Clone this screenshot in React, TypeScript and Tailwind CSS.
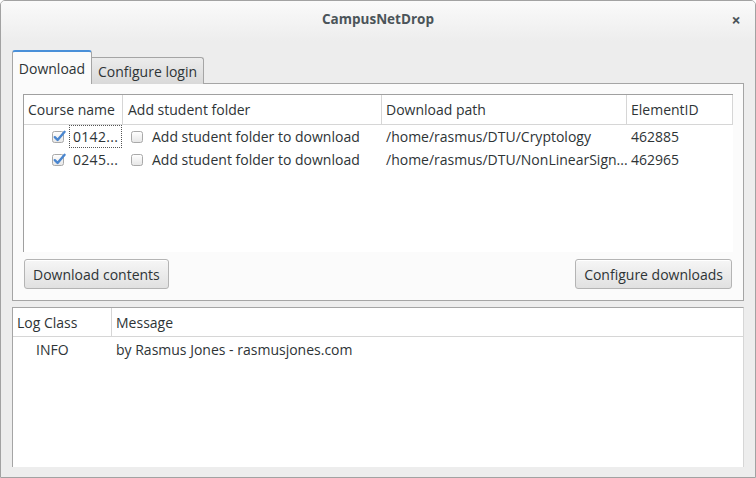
import React from 'react';

const font = { fontFamily: '"Open Sans", "DejaVu Sans", sans-serif' };

function CheckBox({ checked }: { checked: boolean }) {
  return (
    <svg width="15" height="15" viewBox="0 0 15 15" className="shrink-0">
      <defs>
        <linearGradient id="cbg" x1="0" y1="0" x2="0" y2="1">
          <stop offset="0" stopColor="#ffffff" />
          <stop offset="1" stopColor="#e6e6e6" />
        </linearGradient>
      </defs>
      <rect x="0.5" y="2.5" width="11" height="11" rx="2" fill="url(#cbg)" stroke="#a9a9a9" />
      {checked && (
        <path d="M2.8 8.2 L5.6 11 L12.6 2.8" fill="none" stroke="#4a86cf" strokeWidth="2.4" strokeLinecap="round" strokeLinejoin="round" />
      )}
    </svg>
  );
}

const rows = [
  { course: '0142...', path: '/home/rasmus/DTU/Cryptology', id: '462885', focus: true },
  { course: '0245...', path: '/home/rasmus/DTU/NonLinearSign...', id: '462965', focus: false },
];

function Button({ children }: { children: React.ReactNode }) {
  return (
    <button className="h-[30px] px-[8px] rounded-[3px] border border-[#b4b4b4] bg-gradient-to-b from-[#f6f6f6] to-[#e1e1e1] text-[14px] text-[#2e3436] shadow-[inset_0_1px_0_#ffffff]">
      {children}
    </button>
  );
}

export default function App() {
  return (
    <div
      style={font}
      className="w-[756px] h-[478px] flex flex-col border border-[#a2a2a2] rounded-t-[5px] bg-[#ededed] overflow-hidden text-[14px] text-[#2e3436]"
    >
      {/* title bar */}
      <div className="h-[40px] shrink-0 flex items-center bg-gradient-to-b from-[#fafafa] to-[#ededed] pb-[3px]">
        <div className="w-[40px]" />
        <div className="flex-1 text-center font-bold text-[#4b5459] text-[13.5px]">CampusNetDrop</div>
        <div className="w-[40px] text-center text-[#4b5459] text-[16px] font-bold pl-[2px]">×</div>
      </div>

      <div className="flex-1 flex flex-col px-[11px] pt-[9px]">
        {/* tabs */}
        <div className="flex items-end h-[34px] relative z-10 -mb-px">
          <div className="h-[34px] w-[80px] flex items-center justify-center rounded-t-[3px] border border-b-0 border-[#a5a5a5] border-t-2 border-t-[#4a90d9] bg-[#fbfbfb]">
            Download
          </div>
          <div className="h-[27px] w-[112px] flex items-center justify-center rounded-tr-[3px] border border-l-0 border-b-0 border-[#a5a5a5] bg-gradient-to-b from-[#ececec] to-[#d9d9d9]">
            Configure login
          </div>
        </div>

        {/* tab panel */}
        <div className="h-[218px] shrink-0 border border-[#a5a5a5] bg-[#fbfbfb] px-[10px] pt-[10px] pb-[10px] flex flex-col">
          <div className="h-[158px] shrink-0 bg-white border-l border-t border-[#a0a0a0]">
            <div className="flex h-[30px] border-b border-r border-[#d6d6d6]">
              <div className="w-[99px] border-r border-[#d6d6d6] pl-[4px] flex items-center">Course name</div>
              <div className="w-[259px] border-r border-[#d6d6d6] pl-[5px] flex items-center">Add student folder</div>
              <div className="w-[245px] border-r border-[#d6d6d6] pl-[4px] flex items-center">Download path</div>
              <div className="flex-1 pl-[4px] flex items-center">ElementID</div>
            </div>
            {rows.map((r) => (
              <div key={r.id} className="flex h-[23px] items-center">
                <div className="w-[99px] flex items-center pl-[28px]">
                  <CheckBox checked />
                  <span
                    className={
                      'ml-[2px] px-[3px] h-[23px] flex items-center border border-dotted tracking-[0.3px] ' +
                      (r.focus ? 'border-[#555555]' : 'border-transparent')
                    }
                  >
                    {r.course}
                  </span>
                </div>
                <div className="w-[259px] flex items-center pl-[8px]">
                  <CheckBox checked={false} />
                  <span className="ml-[6px]">Add student folder to download</span>
                </div>
                <div className="w-[245px] pl-[4px] whitespace-nowrap overflow-hidden">{r.path}</div>
                <div className="flex-1 pl-[4px]">{r.id}</div>
              </div>
            ))}
          </div>
          <div className="flex justify-between mt-[7px] pl-[1px] pr-[1px]">
            <Button>Download contents</Button>
            <Button>Configure downloads</Button>
          </div>
        </div>

        {/* log */}
        <div className="mt-[6px] h-[160px] shrink-0 bg-white border-l border-t border-[#a5a5a5] border-r border-r-[#d6d6d6]">
          <div className="flex h-[29px] border-b border-[#d6d6d6]">
            <div className="w-[99px] border-r border-[#d6d6d6] pl-[4px] flex items-center">Log Class</div>
            <div className="flex-1 pl-[4px] flex items-center">Message</div>
          </div>
          <div className="flex h-[25px] items-center">
            <div className="w-[99px] pl-[23px]">INFO</div>
            <div className="flex-1 pl-[4px]">by Rasmus Jones - rasmusjones.com</div>
          </div>
        </div>
      </div>
    </div>
  );
}
